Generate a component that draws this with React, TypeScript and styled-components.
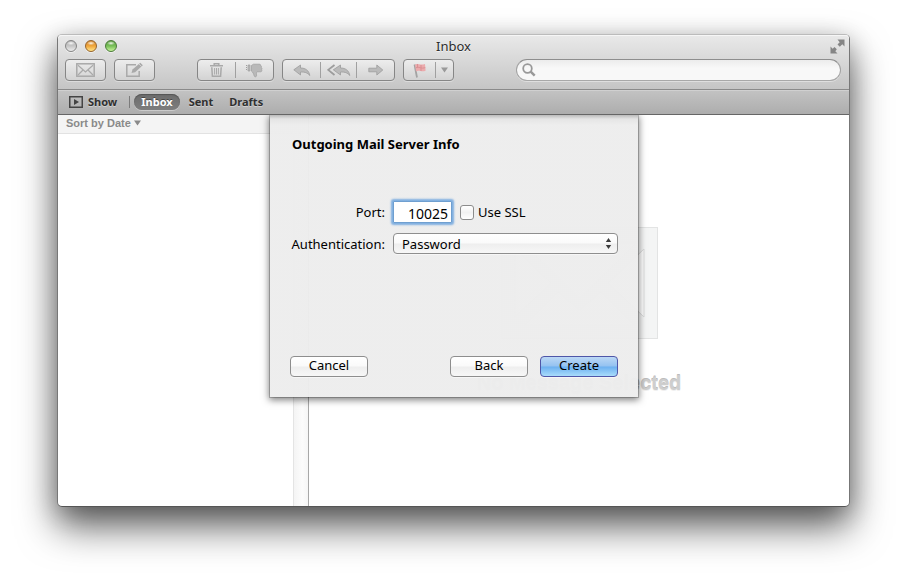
import React from "react";
import styled, { createGlobalStyle, css } from "styled-components";

const ui = `"Lucida Grande", "Noto Sans", "Open Sans", sans-serif`;
const helv = `"Liberation Sans", Arial, sans-serif`;

const GlobalStyle = createGlobalStyle`
  *, *::before, *::after { box-sizing: border-box; }
  body { margin: 0; background: #fff; font-family: ${ui}; color: #000; }
  button, input, select { font: inherit; color: inherit; margin: 0; }
`;

const Desktop = styled.main`
  display: flex;
  min-height: 100vh;
  padding: 34px 56px 78px 57px;
`;

const Window = styled.section`
  display: flex;
  flex: 1;
  flex-direction: column;
  min-width: 0;
  border: 1px solid;
  border-color: #bbb #777 #555;
  border-radius: 5px;
  background: #fff;
  box-shadow: 0 20px 38px rgba(0, 0, 0, 0.6), 0 6px 24px rgba(0, 0, 0, 0.24);
`;

const Header = styled.header`
  border-bottom: 1px solid #8a8a8a;
  border-radius: 4px 4px 0 0;
  background: linear-gradient(#e9e9e9, #c5c5c5);
  box-shadow: inset 0 1px #f6f6f6;
`;

const TitleBar = styled.div`
  display: grid;
  grid-template-columns: 1fr auto 1fr;
  align-items: center;
  height: 22px;
  padding: 0 4px;
`;

const Title = styled.h1`
  margin: 0;
  font-size: 13px;
  font-weight: 400;
  line-height: 22px;
  color: #2c2c2c;
  text-shadow: 0 1px rgba(255, 255, 255, 0.6);
`;

const Lights = styled.div`
  display: flex;
  gap: 8px;
  padding-left: 3px;
`;

const Light = styled.button<{ $top: string; $mid: string; $low: string; $rim: string }>`
  width: 12px;
  height: 12px;
  padding: 0;
  border: 1px solid ${(p) => p.$rim};
  border-radius: 50%;
  background:
    radial-gradient(ellipse 4px 2px at 50% 22%, rgba(255, 255, 255, 0.9), transparent),
    linear-gradient(${(p) => p.$top}, ${(p) => p.$mid} 50%, ${(p) => p.$low});
  box-shadow: 0 1px rgba(255, 255, 255, 0.5);
`;

const FullScreen = styled.button`
  display: flex;
  justify-self: end;
  padding: 0;
  border: 0;
  background: none;
`;

const Tools = styled.div`
  display: flex;
  gap: 8px;
  height: 32px;
  padding: 2px 8px 8px 7px;
`;

const ToolGroup = styled.div<{ $spaced?: boolean }>`
  display: flex;
  flex: none;
  height: 22px;
  margin-left: ${(p) => (p.$spaced ? "34px" : "0")};
  border: 1px solid #868686;
  border-radius: 4px;
  background: linear-gradient(#ededed, #d3d3d3);
  box-shadow: 0 1px rgba(255, 255, 255, 0.35);
`;

const ToolButton = styled.button<{ $width: number }>`
  display: flex;
  align-items: center;
  justify-content: center;
  width: ${(p) => p.$width}px;
  padding: 0;
  border: 0;
  background: none;
`;

const ToolDivider = styled.span`
  width: 1px;
  margin: 2px 0;
  background: #a0a0a0;
`;

const Search = styled.label`
  display: flex;
  flex: 1;
  align-items: center;
  gap: 6px;
  min-width: 0;
  height: 22px;
  margin-left: 54px;
  padding: 0 10px 0 5px;
  border: 1px solid;
  border-color: #8e8e8e #a2a2a2 #a8a8a8;
  border-radius: 11px;
  background: linear-gradient(#ececec, #f8f8f8 40%);
  box-shadow: 0 1px rgba(255, 255, 255, 0.4);
`;

const SearchInput = styled.input`
  flex: 1;
  min-width: 0;
  border: 0;
  outline: 0;
  background: none;
  font-size: 12px;
`;

const Favorites = styled.nav`
  display: flex;
  align-items: center;
  height: 25px;
  padding-left: 11px;
  border-bottom: 1px solid #666;
  background: linear-gradient(#c3c3c3, #adadad);
  box-shadow: inset 0 1px #d0d0d0;
`;

const FavoriteButton = styled.button<{ $active?: boolean }>`
  display: flex;
  align-items: center;
  gap: 5px;
  height: 16px;
  padding: 0 7px;
  border: 0;
  border-radius: 8px;
  background: none;
  font-size: 11px;
  font-weight: 700;
  line-height: 16px;
  color: #303030;
  text-shadow: 0 1px rgba(255, 255, 255, 0.4);
  ${(p) =>
    p.$active &&
    css`
      color: #fff;
      background: linear-gradient(#6c6c6c, #7e7e7e);
      text-shadow: 0 -1px rgba(0, 0, 0, 0.4);
      box-shadow: inset 0 1px 1px #555, 0 1px rgba(255, 255, 255, 0.35);
    `}
`;

const ShowButton = styled(FavoriteButton)`
  padding: 0;
`;

const FavoriteDivider = styled.span`
  width: 1px;
  height: 12px;
  margin: 0 4px 0 12px;
  background: #7c7c7c;
`;

const FavoriteList = styled.div`
  display: flex;
  gap: 2px;
`;

const Body = styled.div`
  position: relative;
  display: flex;
  flex: 1;
  min-height: 391px;
`;

const MessageList = styled.section`
  display: flex;
  flex: none;
  flex-direction: column;
  width: 251px;
  border-right: 1px solid #a8a8a8;
`;

const SortBar = styled.div`
  display: flex;
  height: 19px;
  padding-left: 8px;
  border-bottom: 1px solid #e2e2e2;
  background: #f4f4f4;
`;

const SortButton = styled.button`
  display: flex;
  align-items: center;
  gap: 3px;
  padding: 0 0 2px;
  border: 0;
  background: none;
  font-family: ${helv};
  font-size: 11px;
  font-weight: 700;
  line-height: 16px;
  color: #8a8a8a;
`;

const ScrollTrack = styled.div`
  flex: 1;
  align-self: flex-end;
  width: 15px;
  border-left: 1px solid #e4e4e4;
  background: linear-gradient(to right, #f4f4f4, #fcfcfc 60%, #f6f6f6);
`;

const Viewer = styled.section`
  display: flex;
  flex: 1;
  flex-direction: column;
  align-items: center;
  justify-content: center;
  gap: 32px;
  min-width: 0;
`;

const EmptyText = styled.p`
  margin: 0;
  font-family: ${helv};
  font-size: 20px;
  font-weight: 700;
  line-height: 24px;
  color: #cecece;
  white-space: nowrap;
  text-shadow: 0 1px #f0f0f0, 0 -1px #bcbcbc;
`;

const SheetLayer = styled.div`
  position: absolute;
  inset: 0;
  display: flex;
  align-items: flex-start;
  justify-content: center;
  padding-left: 1px;
  overflow: hidden;
`;

const Sheet = styled.form`
  display: flex;
  flex-direction: column;
  width: 368px;
  min-height: 282px;
  padding: 19px 20px 20px;
  background: linear-gradient(rgba(185, 185, 185, 0.97), rgba(228, 228, 228, 0.97) 4px, rgba(237, 237, 237, 0.97) 10px);
  box-shadow: 0 0 0 1px rgba(0, 0, 0, 0.2), 0 2px 7px 1px rgba(0, 0, 0, 0.5);
`;

const SheetTitle = styled.h2`
  margin: 0 0 47px 2px;
  font-size: 13px;
  font-weight: 700;
  line-height: 20px;
`;

const Fields = styled.div`
  display: grid;
  grid-template-columns: 95px 1fr;
  gap: 10px 8px;
  align-items: center;
  font-size: 13px;
  line-height: 20px;
`;

const FieldLabel = styled.label`
  text-align: right;
`;

const PortRow = styled.div`
  display: flex;
  align-items: center;
  gap: 8px;
`;

const PortInput = styled.input`
  width: 59px;
  height: 22px;
  padding: 2px 3px 0;
  border: 1px solid #6f9fd0;
  border-radius: 1px;
  outline: 0;
  background: #fff;
  font-size: 14px;
  text-align: right;
  box-shadow: 0 0 2px 2px #7eaee0;
`;

const CheckLabel = styled.label`
  display: flex;
  align-items: center;
  gap: 4px;
`;

const Check = styled.input`
  appearance: none;
  width: 14px;
  height: 15px;
  border: 1px solid #8c8c8c;
  border-radius: 3px;
  background: linear-gradient(#fff, #f2f2f2 50%, #fff);
`;

const SelectBox = styled.div`
  display: grid;
  align-items: center;

  & > * {
    grid-area: 1 / 1;
  }

  & > svg {
    justify-self: end;
    margin-right: 6px;
    pointer-events: none;
  }
`;

const glossy = css`
  border: 1px solid #8e8e8e;
  border-radius: 4px;
  background: linear-gradient(#fff, #fafafa 48%, #eee 52%, #f7f7f7);
  box-shadow: 0 1px rgba(255, 255, 255, 0.5);
`;

const Select = styled.select`
  ${glossy}
  appearance: none;
  width: 100%;
  height: 21px;
  padding: 0 24px 0 8px;
`;

const Actions = styled.div`
  display: flex;
  gap: 12px;
  margin-top: auto;
`;

const PushButton = styled.button<{ $primary?: boolean; $first?: boolean }>`
  ${glossy}
  width: 78px;
  height: 21px;
  padding: 0 0 2px;
  margin-right: ${(p) => (p.$first ? "auto" : "0")};
  font-size: 13px;
  line-height: 17px;
  ${(p) =>
    p.$primary &&
    css`
      border-color: #4f56a8;
      background: linear-gradient(#bcd8f5, #94c2f1 48%, #6cb0f0 52%, #a9dcfb);
    `}
`;

const iconStroke = { fill: "none", stroke: "#a9a9a9", strokeWidth: 1.5 };

const MailIcon = () => (
  <svg width="19" height="14" viewBox="0 0 19 14" {...iconStroke}>
    <rect x="0.8" y="0.8" width="17.4" height="12.4" />
    <path d="M2 2.2 9.5 9 17 2.2M2 12 7 7M17 12l-5-5" strokeWidth="1.2" />
  </svg>
);

const ComposeIcon = () => (
  <svg width="19" height="16" viewBox="0 0 19 16" {...iconStroke}>
    <path d="M11 2.8H1.8v11.4h12.4V9" />
    <path d="m6.5 11 1-3.6L15.3.8l2.6 2.5-7.8 6.9z" fill="#a9a9a9" stroke="none" />
    <path d="m14 2 2.6 2.5" stroke="#dedede" strokeWidth="0.8" />
  </svg>
);

const TrashIcon = () => (
  <svg width="13" height="14" viewBox="0 0 13 14" {...iconStroke}>
    <path d="M0 2.8h13M4.2 2.5V.8h4.6v1.7" />
    <path d="m1.8 4.2.6 9h8.2l.6-9" />
    <path d="M4.6 5v6.5M6.5 5v6.5M8.4 5v6.5" strokeWidth="1" />
  </svg>
);

const JunkIcon = () => (
  <svg width="17" height="15" viewBox="0 0 17 15" fill="#b9b9b9" stroke="#9e9e9e" strokeWidth="0.7">
    <path d="M.5 2v6" strokeWidth="1" strokeDasharray="1 1" />
    <path d="M2 2h2v6H2zM5.500 2.400 7.500 1.200H13c1.500 0 1.900.8 1.700 1.600.9.3 1 1.200.6 1.800.8.5.9 1.500.3 2.100.6.9.2 2.100-1 2.100h-3.600c-.8.8-.6 2-.4 3.500.1 1.600-1.900 2.100-2.400.6C7.600 10.800 7 9.200 5.500 8.200z" />
  </svg>
);

const ReplyIcon = () => (
  <svg width="18" height="13" viewBox="0 0 18 13" fill="#bababa" stroke="#9c9c9c" strokeWidth="0.8">
    <path d="M.8 5.8 7.5 1v3C12.5 4 16 6.5 16.8 11.5 14.5 8.5 11.5 7.8 7.5 8v3z" />
  </svg>
);

const ReplyAllIcon = () => (
  <svg width="24" height="13" viewBox="0 0 24 13" fill="#bababa" stroke="#9c9c9c" strokeWidth="0.8">
    <path d="M7.5 1 1.2 5.900 7.500 11" fill="none" strokeWidth="1.8" />
    <path d="M6.3 5.8 13.500 1v3c5 0 8.500 2.500 9.300 7.500-2.300-3-5.300-3.700-9.300-3.500v3z" />
  </svg>
);

const ForwardIcon = () => (
  <svg width="16" height="12" viewBox="0 0 16 12" fill="#bababa" stroke="#9c9c9c" strokeWidth="0.8">
    <path d="M.8 4.200h8V1l6 5-6 5V7.800h-8z" />
  </svg>
);

const FlagIcon = () => (
  <svg width="13" height="15" viewBox="0 0 13 15">
    <path d="M1.500 1.500 4 14.500" stroke="#a3a3a3" strokeWidth="1.800" />
    <path d="M2 1.500C4.500-.3 6.500 2.600 12 1l.6 6.800C8 9.500 6.500 6.500 3 8.400z" fill="#ebabad" />
    <path d="M4.500 1v3.500M8 2v6M3 4.700c3-1.500 5 1.500 9.300 0" stroke="#d98d91" strokeWidth="0.9" fill="none" />
  </svg>
);

const DownIcon = ({ color = "#9a9a9a" }: { color?: string }) => (
  <svg width="7" height="6" viewBox="0 0 7 6" fill={color}>
    <path d="M0 .5h7L3.500 5.500z" />
  </svg>
);

const SearchIcon = () => (
  <svg width="14" height="14" viewBox="0 0 14 14" fill="none" stroke="#999">
    <circle cx="5.500" cy="5.500" r="4.300" strokeWidth="1.800" />
    <path d="m8.700 8.700 4 4" strokeWidth="2.500" />
  </svg>
);

const FullScreenIcon = () => (
  <svg width="15" height="15" viewBox="0 0 15 15" fill="#858585">
    <path d="M7.500.500h7v7l-2.200-2.200-2.500 2.500-2.300-2.300 2.200-2.300z" />
    <path d="M7.500 14.500h-7v-7l2.200 2.200 1.800-1.800 2.300 2.300-1.500 2.100z" />
  </svg>
);

const ShowIcon = () => (
  <svg width="14" height="12" viewBox="0 0 14 12">
    <rect x="0.750" y="0.750" width="12.500" height="10.500" fill="none" stroke="#444" strokeWidth="1.500" />
    <path d="M5 3v6l5-3z" fill="#444" />
  </svg>
);

const StepIcon = () => (
  <svg width="7" height="11" viewBox="0 0 7 11" fill="#3c3c3c">
    <path d="M.8 4 3.500 0l2.700 4zM.8 7l2.700 4 2.700-4z" />
  </svg>
);

const EnvelopeArt = () => (
  <svg width="157" height="112" viewBox="0 0 157 112">
    <rect x="0.500" y="0.500" width="156" height="111" fill="#f4f5f5" stroke="#e3e4e4" />
    <path d="M14 22 50 56 14 90zM143 22 107 56l36 34z" fill="#fff" stroke="#dcdddd" />
    <path d="M22 16h113L78.500 72zM24 98l33-33 21.500 18L100 65l33 33z" fill="#fff" stroke="#e3e4e4" />
  </svg>
);

export default function App() {
  return (
    <>
      <GlobalStyle />
      <Desktop>
        <Window aria-label="Inbox">
          <Header>
            <TitleBar>
              <Lights>
                <Light type="button" aria-label="Close" $top="#b5b5b5" $mid="#c6c6c6" $low="#ededed" $rim="#858585" />
                <Light type="button" aria-label="Minimize" $top="#d08a35" $mid="#f0a53a" $low="#ffe68a" $rim="#96622a" />
                <Light type="button" aria-label="Zoom" $top="#5f9e45" $mid="#77bf57" $low="#c8f59c" $rim="#4a7a38" />
              </Lights>
              <Title>Inbox</Title>
              <FullScreen type="button" aria-label="Full screen"><FullScreenIcon /></FullScreen>
            </TitleBar>
            <Tools>
              <ToolGroup>
                <ToolButton type="button" $width={39} aria-label="Get mail"><MailIcon /></ToolButton>
              </ToolGroup>
              <ToolGroup>
                <ToolButton type="button" $width={39} aria-label="Compose"><ComposeIcon /></ToolButton>
              </ToolGroup>
              <ToolGroup $spaced>
                <ToolButton type="button" $width={37} aria-label="Delete"><TrashIcon /></ToolButton>
                <ToolDivider />
                <ToolButton type="button" $width={37} aria-label="Junk"><JunkIcon /></ToolButton>
              </ToolGroup>
              <ToolGroup>
                <ToolButton type="button" $width={37} aria-label="Reply"><ReplyIcon /></ToolButton>
                <ToolDivider />
                <ToolButton type="button" $width={35} aria-label="Reply all"><ReplyAllIcon /></ToolButton>
                <ToolDivider />
                <ToolButton type="button" $width={37} aria-label="Forward"><ForwardIcon /></ToolButton>
              </ToolGroup>
              <ToolGroup>
                <ToolButton type="button" $width={31} aria-label="Flag"><FlagIcon /></ToolButton>
                <ToolDivider />
                <ToolButton type="button" $width={17} aria-label="Flag colors"><DownIcon /></ToolButton>
              </ToolGroup>
              <Search>
                <SearchIcon />
                <SearchInput type="text" aria-label="Search" />
              </Search>
            </Tools>
          </Header>
          <Favorites>
            <ShowButton type="button"><ShowIcon />Show</ShowButton>
            <FavoriteDivider />
            <FavoriteList>
              <FavoriteButton type="button" $active>Inbox</FavoriteButton>
              <FavoriteButton type="button">Sent</FavoriteButton>
              <FavoriteButton type="button">Drafts</FavoriteButton>
            </FavoriteList>
          </Favorites>
          <Body>
            <MessageList>
              <SortBar>
                <SortButton type="button">Sort by Date<DownIcon color="#8a8a8a" /></SortButton>
              </SortBar>
              <ScrollTrack />
            </MessageList>
            <Viewer>
              <EnvelopeArt />
              <EmptyText>No Message Selected</EmptyText>
            </Viewer>
            <SheetLayer>
              <Sheet onSubmit={(e) => e.preventDefault()}>
                <SheetTitle>Outgoing Mail Server Info</SheetTitle>
                <Fields>
                  <FieldLabel htmlFor="port">Port:</FieldLabel>
                  <PortRow>
                    <PortInput id="port" type="text" defaultValue="10025" />
                    <CheckLabel><Check type="checkbox" />Use SSL</CheckLabel>
                  </PortRow>
                  <FieldLabel htmlFor="auth">Authentication:</FieldLabel>
                  <SelectBox>
                    <Select id="auth" defaultValue="Password">
                      <option>Password</option>
                    </Select>
                    <StepIcon />
                  </SelectBox>
                </Fields>
                <Actions>
                  <PushButton type="button" $first>Cancel</PushButton>
                  <PushButton type="button">Back</PushButton>
                  <PushButton type="submit" $primary>Create</PushButton>
                </Actions>
              </Sheet>
            </SheetLayer>
          </Body>
        </Window>
      </Desktop>
    </>
  );
}
